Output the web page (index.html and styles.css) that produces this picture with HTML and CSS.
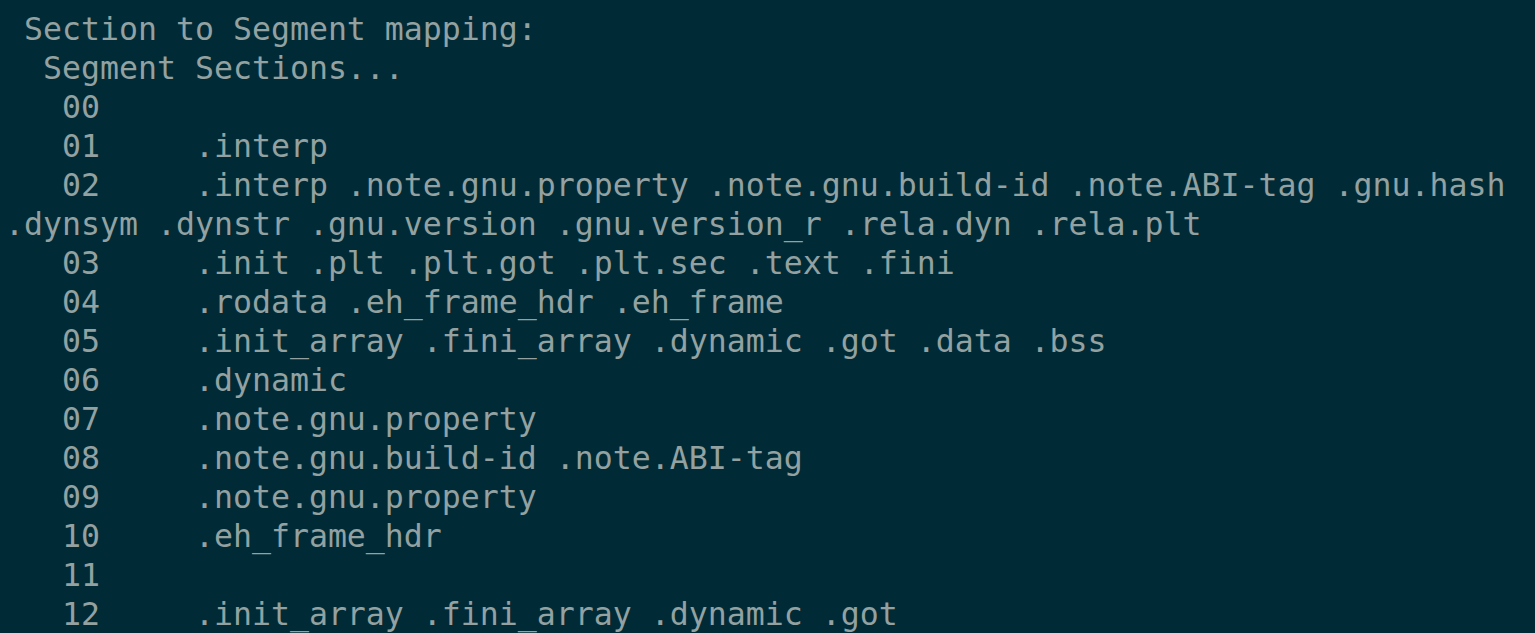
FILE: index.html
```html
<!DOCTYPE html>
<html>
<head>
<meta charset="utf-8">
<link rel="stylesheet" href="styles.css">
</head>
<body>
<pre class="term"> Section to Segment mapping:
  Segment Sections...
   00     
   01     .interp 
   02     .interp .note.gnu.property .note.gnu.build-id .note.ABI-tag .gnu.hash 
.dynsym .dynstr .gnu.version .gnu.version_r .rela.dyn .rela.plt 
   03     .init .plt .plt.got .plt.sec .text .fini 
   04     .rodata .eh_frame_hdr .eh_frame 
   05     .init_array .fini_array .dynamic .got .data .bss 
   06     .dynamic 
   07     .note.gnu.property 
   08     .note.gnu.build-id .note.ABI-tag 
   09     .note.gnu.property 
   10     .eh_frame_hdr 
   11     
   12     .init_array .fini_array .dynamic .got 
</pre>
</body>
</html>
```

FILE: styles.css
```css
html, body {
  margin: 0;
  padding: 0;
  background: #002b36;
  height: 100%;
  overflow: hidden;
}

.term {
  margin: 0;
  padding: 10px 0 0 5px;
  font-family: "DejaVu Sans Mono", monospace;
  font-size: 31.56px;
  line-height: 39px;
  color: #93a1a1;
  white-space: pre;
}
```
